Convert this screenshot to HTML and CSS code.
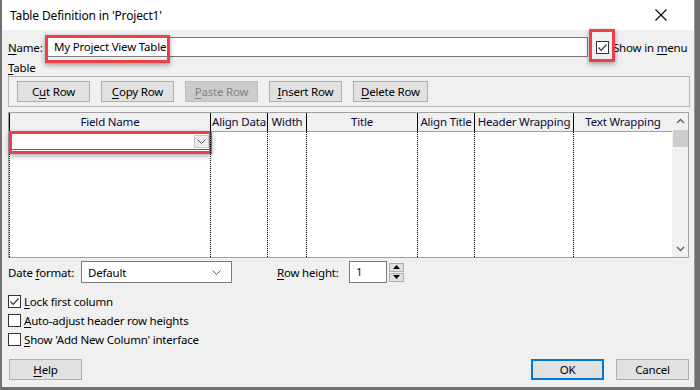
FILE: index.html
```html
<!DOCTYPE html>
<html lang="en">
<head>
  <meta charset="UTF-8">
  <title>Table Definition</title>
  <link rel="stylesheet" href="styles.css">
</head>
<body>
  <div class="dialog">
    <div class="titlebar">
      <span class="title">Table Definition in 'Project1'</span>
      <svg class="close" width="12" height="12" viewBox="0 0 12 12"><path d="M0.5 0.5L11.5 11.5M11.5 0.5L0.5 11.5" stroke="#000" stroke-width="1.1"/></svg>
    </div>
    <div class="content">
      <div class="name-row">
        <label class="lbl name-lbl"><u>N</u>ame:</label>
        <div class="name-input">
          My Project View Table
          <span class="mark mark-name"></span>
        </div>
        <div class="show-menu">
          <span class="check-wrap">
            <span class="check checked"><svg width="11" height="11" viewBox="0 0 11 11"><path d="M1.5 5.5L4.2 8.3L9.5 2.5" fill="none" stroke="#333" stroke-width="1.2"/></svg></span>
            <span class="mark mark-check"></span>
          </span>
          <span>Show in <u>m</u>enu</span>
        </div>
      </div>
      <div class="lbl table-lbl"><u>T</u>able</div>
      <div class="group">
        <button class="btn">C<u>u</u>t Row</button>
        <button class="btn"><u>C</u>opy Row</button>
        <button class="btn" disabled><u>P</u>aste Row</button>
        <button class="btn"><u>I</u>nsert Row</button>
        <button class="btn wide"><u>D</u>elete Row</button>
      </div>
      <div class="grid">
        <div class="cols">
          <div class="col c1">
            <div class="hd">Field Name</div>
            <div class="combo-row">
              <div class="combo"><span class="drop"><svg width="9" height="5" viewBox="0 0 9 5"><path d="M0.5 0.5L4.5 4.5L8.5 0.5" fill="none" stroke="#555" stroke-width="1"/></svg></span></div>
              <span class="mark mark-field"></span>
            </div>
          </div>
          <div class="col c2"><div class="hd">Align Data</div></div>
          <div class="col c3"><div class="hd">Width</div></div>
          <div class="col c4"><div class="hd">Title</div></div>
          <div class="col c5"><div class="hd">Align Title</div></div>
          <div class="col c6"><div class="hd">Header Wrapping</div></div>
          <div class="col c7"><div class="hd">Text Wrapping</div></div>
        </div>
        <div class="scrollbar">
          <svg width="9" height="6" viewBox="0 0 9 6"><path d="M1 5L4.5 1.5L8 5" fill="none" stroke="#606060" stroke-width="1.4"/></svg>
          <div class="thumb"></div>
          <div class="track"></div>
          <svg width="9" height="6" viewBox="0 0 9 6"><path d="M1 1L4.5 4.5L8 1" fill="none" stroke="#606060" stroke-width="1.4"/></svg>
        </div>
      </div>
      <div class="date-row">
        <label class="lbl date-lbl">Date <u>f</u>ormat:</label>
        <div class="select">Default<svg width="9" height="5" viewBox="0 0 9 5"><path d="M0.5 0.5L4.5 4.5L8.5 0.5" fill="none" stroke="#555" stroke-width="1"/></svg></div>
        <label class="lbl row-lbl"><u>R</u>ow height:</label>
        <div class="num">1</div>
        <div class="spin">
          <span><svg width="7" height="4" viewBox="0 0 7 4"><path d="M0 4L3.5 0L7 4Z" fill="#000"/></svg></span>
          <span><svg width="7" height="4" viewBox="0 0 7 4"><path d="M0 0L3.5 4L7 0Z" fill="#000"/></svg></span>
        </div>
      </div>
      <div class="checks">
        <div class="opt"><span class="check checked"><svg width="11" height="11" viewBox="0 0 11 11"><path d="M1.5 5.5L4.2 8.3L9.5 2.5" fill="none" stroke="#333" stroke-width="1.2"/></svg></span><span><u>L</u>ock first column</span></div>
        <div class="opt"><span class="check"></span><span><u>A</u>uto-adjust header row heights</span></div>
        <div class="opt"><span class="check"></span><span><u>S</u>how 'Add New Column' interface</span></div>
      </div>
      <div class="footer">
        <button class="btn"><u>H</u>elp</button>
        <div class="right">
          <button class="btn default">OK</button>
          <button class="btn">Cancel</button>
        </div>
      </div>
    </div>
  </div>
</body>
</html>
```
FILE: styles.css
```css
body { margin: 0; background: #707070; font-family: "Noto Sans", sans-serif; font-size: 11.5px; letter-spacing: -0.2px; color: #000; }
u { text-decoration: underline; text-underline-offset: 2px; }

.dialog { width: 692px; height: 387px; margin-left: 2px; background: #f0f0f0; border-right: 1px solid #9a9a9a; display: flex; flex-direction: column; }
.titlebar { height: 30px; background: #fff; display: flex; align-items: center; justify-content: space-between; padding: 0 27px 0 8px; flex-shrink: 0; }
.title { font-size: 12px; letter-spacing: -0.15px; }
.content { padding: 0 5px 0 6px; display: flex; flex-direction: column; flex: 1; }

.lbl { white-space: nowrap; }
.name-row { display: flex; align-items: center; margin-top: 7px; height: 20px; }
.name-lbl { width: 38px; flex-shrink: 0; }
.name-input { position: relative; flex: 0 0 542px; height: 20px; border: 1px solid #7a7a7a; background: #fff; padding-left: 7px; line-height: 18px; box-sizing: border-box; white-space: nowrap; }
.show-menu { display: flex; align-items: center; margin-left: 8px; gap: 4px; white-space: nowrap; }
.check-wrap { position: relative; display: inline-flex; }

.mark { position: absolute; border: 3px solid #ec4046; box-shadow: 0 2px 5px rgba(0,0,0,0.35); pointer-events: none; }
.mark-name { left: -2px; top: -3px; width: 119px; height: 22px; }
.mark-check { left: -7px; top: -12px; width: 20px; height: 27px; }
.mark-field { left: -1px; top: -1px; width: 197px; height: 17px; }

.check { width: 11px; height: 11px; border: 1px solid #333; background: #fff; display: inline-flex; align-items: center; justify-content: center; flex-shrink: 0; }

.table-lbl { margin-top: 3px; height: 16px; line-height: 16px; }
.group { border: 1px solid #b4b4b4; height: 29px; display: flex; align-items: center; gap: 11px; padding: 0 8px; width: 664px; }
.btn { font-family: inherit; font-size: 11.5px; letter-spacing: -0.2px; color: #000; background: #e1e1e1; border: 1px solid #adadad; height: 21px; width: 73px; padding: 0; box-sizing: border-box; }
.btn.wide { width: 75px; }
.btn:disabled { background: #cccccc; border-color: #bfbfbf; color: #838383; }
.btn.default { border: 2px solid #0078d7; }

.grid { margin-top: 5px; width: 679px; height: 144px; border: 1px solid #a0a0a0; display: flex; background: #fff; }
.cols { display: flex; flex: 1; }
.col { position: relative; background-image: linear-gradient(#000 50%, transparent 50%); background-size: 1px 2px; background-repeat: repeat-y; background-position: left 0 top 19px; }
.hd { height: 18px; line-height: 18px; text-align: center; background: #f0f0f0; border-left: 1px solid #000; border-bottom: 1px solid #a0a0a0; white-space: nowrap; overflow: hidden; color: #0b0b3a; }
.c1 { width: 201px; }
.c2 { width: 57px; }
.c3 { width: 39px; }
.c4 { width: 111px; }
.c5 { width: 57px; }
.c6 { width: 99px; }
.c7 { width: 99px; }
.combo-row { position: relative; margin-left: 1px; }
.combo { height: 16px; border-top: 1px solid #2f7d32; border-bottom: 1px solid #2f7d32; background: #fff; display: flex; justify-content: flex-end; align-items: center; padding-right: 1px; }
.drop { width: 15px; height: 13px; background: #ececec; border: 1px solid #c8c8c8; display: flex; align-items: center; justify-content: center; box-sizing: border-box; }

.scrollbar { width: 16px; background: #f0f0f0; display: flex; flex-direction: column; align-items: center; padding-top: 5px; box-sizing: border-box; }
.thumb { width: 15px; height: 17px; background: #cdcdcd; margin-top: 6px; }
.track { flex: 1; }
.scrollbar svg:last-child { margin-bottom: 5px; }

.date-row { display: flex; align-items: center; margin-top: 2px; height: 24px; }
.date-lbl { width: 73px; flex-shrink: 0; }
.select { width: 151px; height: 22px; box-sizing: border-box; border: 1px solid #7a7a7a; background: #fff; display: flex; align-items: center; justify-content: space-between; padding: 0 10px 0 6px; }
.row-lbl { margin-left: 45px; width: 72px; }
.num { width: 38px; height: 22px; box-sizing: border-box; border: 1px solid #7a7a7a; background: #fff; padding-left: 6px; line-height: 20px; color: #3a0030; }
.spin { margin-left: 2px; display: flex; flex-direction: column; gap: 1px; }
.spin span { width: 15px; height: 9px; box-sizing: border-box; background: #e1e1e1; border: 1px solid #adadad; display: flex; align-items: center; justify-content: center; }

.checks { margin-top: 11px; display: flex; flex-direction: column; gap: 6px; }
.opt { display: flex; align-items: center; gap: 3px; height: 13px; }

.footer { margin-top: auto; margin-bottom: 7px; display: flex; justify-content: space-between; align-items: center; padding-left: 1px; }
.footer .right { display: flex; gap: 12px; }
.footer .btn { width: 73px; height: 21px; }
```
